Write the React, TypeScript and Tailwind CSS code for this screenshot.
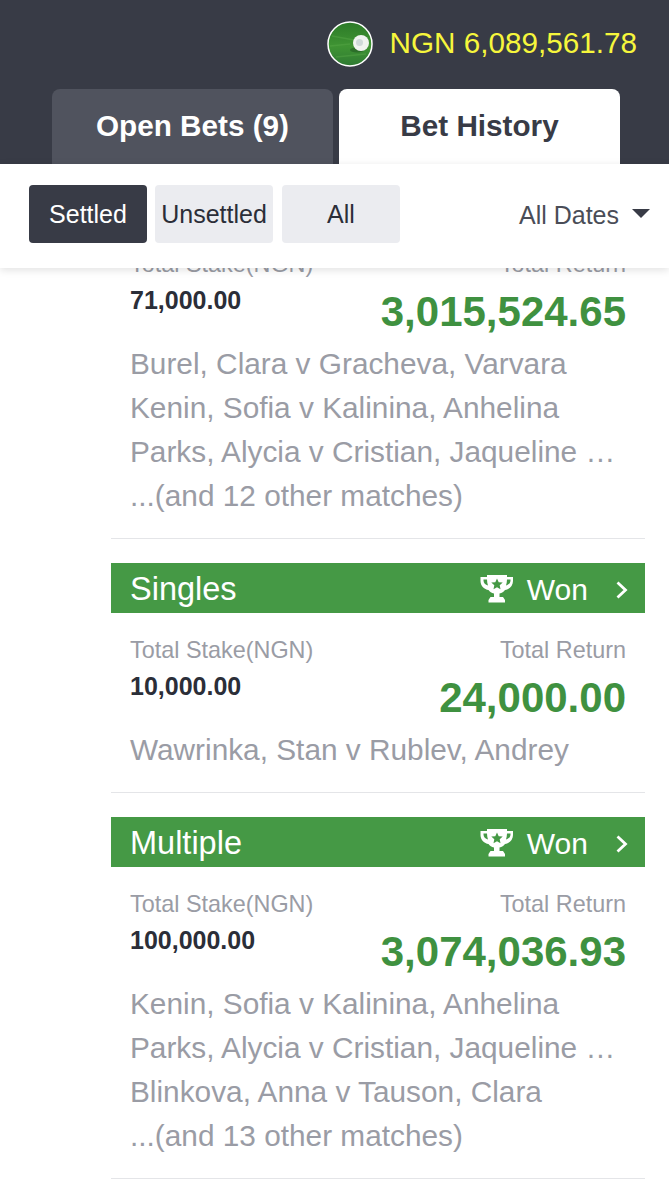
const font = { fontFamily: '"Liberation Sans", Arial, sans-serif' }

type Bet = {
  title: string
  stake: string
  total: string
  matches: string[]
}

const bets: Bet[] = [
  {
    title: "Singles",
    stake: "10,000.00",
    total: "24,000.00",
    matches: ["Wawrinka, Stan v Rublev, Andrey"],
  },
  {
    title: "Multiple",
    stake: "100,000.00",
    total: "3,074,036.93",
    matches: [
      "Kenin, Sofia v Kalinina, Anhelina",
      "Parks, Alycia v Cristian, Jaqueline …",
      "Blinkova, Anna v Tauson, Clara",
      "...(and 13 other matches)",
    ],
  },
]

function Trophy() {
  return (
    <svg width="34" height="29" viewBox="0 0 34 29" fill="none">
      <path d="M7 1h20v2h6v4c0 5-4 8.500-8 9-1.300 1.800-3 3-5.500 3.500V23h3.500l2 3v2.500H8.500V26l2-3H14v-3.500c-2.500-.5-4.200-1.700-5.500-3.500-4-.5-8-4-8-9V3H7z" fill="#fff" />
      <path d="M3.500 5.500H7c.1 2.300.4 4.300 1 6-2.600-.6-4.500-2.600-4.500-5zM30.500 5.500H27c-.1 2.300-.4 4.300-1 6 2.600-.6 4.500-2.600 4.500-5z" fill="#459945" />
      <path d="M17 4.500l1.700 3.700 4 .4-3 2.700.8 4-3.500-2-3.500 2 .8-4-3-2.700 4-.4z" fill="#459945" />
    </svg>
  )
}

function Chevron() {
  return (
    <svg width="14" height="20" viewBox="0 0 14 20" fill="none">
      <path d="M2.500 2.500l8 7.500-8 7.500" stroke="#fff" strokeWidth="2.800" />
    </svg>
  )
}

function Ball() {
  return (
    <svg width="46" height="46" viewBox="0 0 46 46">
      <defs>
        <linearGradient id="grass" x1="0" y1="0" x2="0" y2="1">
          <stop offset="0" stopColor="#2c7a28" />
          <stop offset="0.55" stopColor="#3f9433" />
          <stop offset="1" stopColor="#2f7a33" />
        </linearGradient>
      </defs>
      <circle cx="23" cy="23" r="22" fill="url(#grass)" stroke="#fff" strokeWidth="1.500" />
      <path d="M5 15l22 4M3 25l20-2M9 36l30-3" stroke="#58a848" strokeWidth="1.500" opacity="0.45" />
      <ellipse cx="30" cy="29" rx="7" ry="2.500" fill="#1d4f1f" opacity="0.5" />
      <circle cx="34" cy="22" r="8" fill="#f0f3f0" />
      <circle cx="32.500" cy="21.500" r="3.500" fill="#cfd9d9" />
    </svg>
  )
}

function StakeRow({ stake, total }: { stake: string; total: string }) {
  return (
    <div className="flex justify-between pl-[19px] pr-[19px]">
      <div>
        <div className="text-[23.400px] leading-[26px] text-[#9a9ca5]">Total Stake(NGN)</div>
        <div className="mt-[9px] text-[25px] leading-[28px] font-bold text-[#2b2e38]">{stake}</div>
      </div>
      <div className="text-right">
        <div className="text-[23.400px] leading-[26px] text-[#9a9ca5]">Total Return</div>
        <div className="mt-[11px] text-[42px] leading-[48px] font-bold text-[#3f9140]">{total}</div>
      </div>
    </div>
  )
}

function Matches({ lines }: { lines: string[] }) {
  return (
    <div className="mt-[6px] pl-[19px] pb-[20px] border-b border-[#e4e5e8]">
      {lines.map((l) => (
        <div key={l} className="text-[29.800px] leading-[44px] text-[#9a9ca5] whitespace-nowrap">
          {l}
        </div>
      ))}
    </div>
  )
}

export default function App() {
  return (
    <div style={font} className="h-[1200px] w-[669px] overflow-hidden bg-white">
      <header className="h-[164px] bg-[#383b46]">
        <div className="flex h-[89px] items-start justify-end pt-[21px] pr-[32px]">
          <Ball />
          <span className="ml-[16px] mt-[5px] text-[29.700px] leading-[34px] text-[#f6f63c]">NGN 6,089,561.78</span>
        </div>
        <div className="flex gap-[6px] pl-[52px]">
          <div className="flex h-[75px] w-[281px] items-center justify-center rounded-t-lg bg-[#50535e] text-[29.700px] font-bold text-white">
            Open Bets (9)
          </div>
          <div className="flex h-[75px] w-[281px] items-center justify-center rounded-t-lg bg-white text-[29.700px] font-bold text-[#383b46]">
            Bet History
          </div>
        </div>
      </header>

      <div className="relative z-10 flex h-[104px] items-start bg-white pl-[29px] pr-[19px] pt-[21px] shadow-[0_2px_8px_rgba(0,0,0,0.12)]">
        <button className="h-[58px] w-[118px] rounded bg-[#383b46] pt-[2px] text-[25px] text-white">Settled</button>
        <button className="ml-[8px] h-[58px] w-[118px] rounded bg-[#ebecf0] pt-[2px] text-[25px] text-[#2b2e38]">Unsettled</button>
        <button className="ml-[9px] h-[58px] w-[118px] rounded bg-[#ebecf0] pt-[2px] text-[25px] text-[#2b2e38]">All</button>
        <div className="ml-auto flex h-[60px] items-center">
          <span className="pt-[2px] text-[25px] text-[#4a4d57]">All Dates</span>
          <span className="ml-[13px] mb-[3px] h-0 w-0 border-x-[9px] border-t-[9px] border-x-transparent border-t-[#383b46]" />
        </div>
      </div>

      <main className="ml-[111px] mr-[24px] -mt-[17px]">
        <section>
          <StakeRow stake="71,000.00" total="3,015,524.65" />
          <Matches
            lines={[
              "Burel, Clara v Gracheva, Varvara",
              "Kenin, Sofia v Kalinina, Anhelina",
              "Parks, Alycia v Cristian, Jaqueline …",
              "...(and 12 other matches)",
            ]}
          />
        </section>

        {bets.map((b) => (
          <section key={b.title} className="mt-[24px]">
            <div className="mb-[24px] flex h-[50px] items-center bg-[#459945] pl-[19px] pr-[16px] text-white">
              <span className="pt-[3px] text-[32.500px]">{b.title}</span>
              <span className="ml-auto flex"><Trophy /></span>
              <span className="ml-[13px] pt-[2px] text-[30px]">Won</span>
              <span className="ml-[27px] flex pt-[3px]"><Chevron /></span>
            </div>
            <StakeRow stake={b.stake} total={b.total} />
            <Matches lines={b.matches} />
          </section>
        ))}
      </main>
    </div>
  )
}
